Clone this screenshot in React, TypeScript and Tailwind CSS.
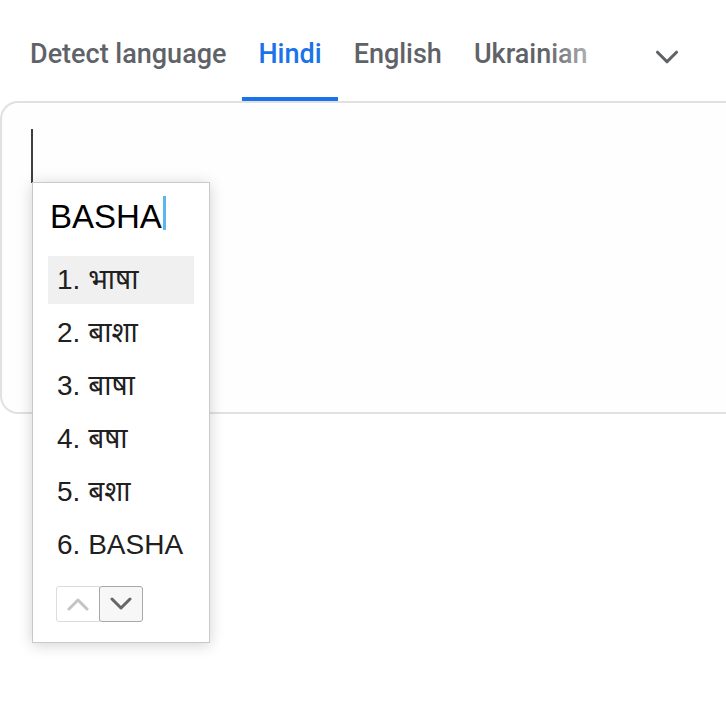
import { ChevronDown } from 'lucide-react';

const tabs = [
  { label: 'Detect language', active: false },
  { label: 'Hindi', active: true },
  { label: 'English', active: false },
  { label: 'Ukrainian', active: false },
];

const suggestions = ['भाषा', 'बाशा', 'बाषा', 'बषा', 'बशा', 'BASHA'];

function SmallChevron({ up, color }: { up?: boolean; color: string }) {
  return (
    <svg width="24" height="14" viewBox="0 0 24 14" fill="none">
      <polyline
        points={up ? '3,12 12,3 21,12' : '3,2 12,11 21,2'}
        stroke={color}
        strokeWidth="3"
        strokeLinecap="round"
        strokeLinejoin="round"
      />
    </svg>
  );
}

// --- INPUT TOOL POPUP ---
function Suggestions() {
  return (
    <div className="absolute left-[32px] top-[182px] w-[178px] bg-white border border-[#c9c9c9] shadow-[0_2px_14px_rgba(0,0,0,0.18)] pt-[16px] pb-[20px] px-[15px] font-['Liberation_Sans','Noto_Sans',sans-serif] text-[#202020]">
      <div className="flex h-[36px] pl-[2px]">
        <span className="text-[33px] leading-[36px] text-black">BASHA</span>
        <span className="self-start -mt-[3px] ml-[1px] h-[34px] w-[3px] bg-[#5ab6ec]" />
      </div>
      <div className="mt-[21px] flex flex-col gap-[5px]">
        {suggestions.map((s, i) => (
          <div
            key={s}
            className={`h-[48px] pl-[9px] text-[28px] leading-[48px] whitespace-nowrap ${i === 0 ? 'bg-[#f0f0f0]' : ''}`}
          >
            {i + 1}. {s}
          </div>
        ))}
      </div>
      <div className="mt-[17px] ml-[8px] flex">
        <button type="button" className="w-[44px] h-[36px] flex items-center justify-center border border-[#dcdcdc] rounded-l-[3px] bg-white">
          <SmallChevron up color="#c4c4c4" />
        </button>
        <button type="button" className="w-[44px] h-[36px] flex items-center justify-center border border-[#a8a8a8] rounded-[3px] bg-[#f7f7f7] -ml-px">
          <SmallChevron color="#666666" />
        </button>
      </div>
    </div>
  );
}

export default function App() {
  return (
    <div className="relative w-[726px] h-[726px] bg-white overflow-hidden font-['Roboto','Liberation_Sans',sans-serif]">
      {/* language tabs */}
      <div className="relative flex h-[101px] pl-[14px]">
        {tabs.map((t) => (
          <div
            key={t.label}
            className={`px-4 pt-[39px] border-b-4 text-[27px] leading-[30px] font-medium whitespace-nowrap ${t.active ? 'border-[#1a73e8] text-[#1a73e8]' : 'border-transparent text-[#5f6368]'}`}
          >
            {t.label}
          </div>
        ))}
        <div className="absolute left-[545px] top-[30px] w-[65px] h-[50px] bg-gradient-to-r from-white/0 to-white/75" />
        <div className="ml-auto mr-[40px] pt-[38px]">
          <ChevronDown size={38} strokeWidth={2} className="text-[#5f6368]" />
        </div>
      </div>

      {/* source text box */}
      <div className="w-[760px] h-[313px] border-2 border-r-0 border-[#e1e1e1] rounded-l-[18px] bg-[#fefefe] pl-[29px] pt-[26px]">
        <div className="w-[2px] h-[54px] bg-[#3c4043]" />
      </div>

      <Suggestions />
    </div>
  );
}
